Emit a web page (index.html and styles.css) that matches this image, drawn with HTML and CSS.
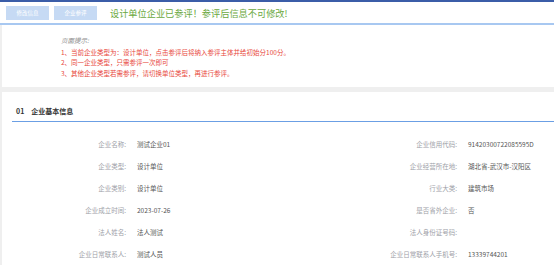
FILE: index.html
```html
<!DOCTYPE html>
<html lang="zh">
<head>
<meta charset="utf-8">
<link rel="stylesheet" href="styles.css">
</head>
<body>
<div class="topbar"></div>
<div class="toolbar">
  <button class="btn">修改信息</button>
  <button class="btn">企业参评</button>
  <span class="alert-title">设计单位企业已参评！参评后信息不可修改!</span>
</div>
<div class="page">
  <div class="notice">
    <div class="notice-title">页面提示:</div>
    <div class="notice-line">1、当前企业类型为：设计单位，点击参评后将纳入参评主体并给初始分100分。</div>
    <div class="notice-line">2、同一企业类型，只需参评一次即可</div>
    <div class="notice-line">3、其他企业类型若需参评，请切换单位类型，再进行参评。</div>
  </div>
  <div class="card">
    <div class="card-head"><span class="num">01</span><span class="head-title">企业基本信息</span></div>
    <div class="grid">
      <div class="lbl">企业名称:</div><div class="val">测试企业01</div>
      <div class="lbl">企业信用代码:</div><div class="val">91420300722085595D</div>
      <div class="lbl">企业类型:</div><div class="val">设计单位</div>
      <div class="lbl">企业经营所在地:</div><div class="val">湖北省-武汉市-汉阳区</div>
      <div class="lbl">企业类别:</div><div class="val">设计单位</div>
      <div class="lbl">行业大类:</div><div class="val">建筑市场</div>
      <div class="lbl">企业成立时间:</div><div class="val">2023-07-26</div>
      <div class="lbl">是否省外企业:</div><div class="val">否</div>
      <div class="lbl">法人姓名:</div><div class="val">法人测试</div>
      <div class="lbl">法人身份证号码:</div><div class="val"></div>
      <div class="lbl">企业日常联系人:</div><div class="val">测试人员</div>
      <div class="lbl">企业日常联系人手机号:</div><div class="val">13339744201</div>
    </div>
  </div>
</div>
</body>
</html>
```

FILE: styles.css
```css
html, body {
  margin: 0;
  padding: 0;
  background: #ffffff;
  font-family: "Noto Sans CJK SC", "Noto Sans", sans-serif;
}
.topbar {
  height: 2px;
  background: #3b5da8;
}
.toolbar {
  height: 21px;
  display: flex;
  align-items: center;
  gap: 5px;
  padding-left: 6px;
  border-bottom: 2px solid #a8c8f1;
  background: #fff;
}
.btn {
  width: 43px;
  height: 14px;
  padding: 0;
  border: none;
  background: #c6daf4;
  color: #ffffff;
  font-family: inherit;
  font-size: 5.5px;
  line-height: 14px;
}
.alert-title {
  margin-left: 8px;
  color: #6aa83e;
  font-size: 9.2px;
  line-height: 12px;
}
.page {
  background: #efefef;
  padding-left: 2px;
}
.notice {
  background: #fff;
  padding: 10px 0 8px 59px;
  font-size: 6.5px;
  line-height: 10.7px;
}
.notice-title {
  color: #8a8a8a;
  font-style: italic;
  margin-bottom: 1px;
}
.notice-line {
  color: #e8473b;
}
.card {
  background: #fff;
  margin-top: 5px;
  padding-bottom: 6px;
}
.card-head {
  margin-left: 10px;
  padding: 14px 0 5px 4px;
  border-bottom: 1px solid #6b9fe4;
  font-size: 7px;
  line-height: 10px;
  font-weight: bold;
  color: #333;
  display: flex;
  gap: 7px;
}
.grid {
  margin-top: 11px;
  display: grid;
  grid-template-columns: 124px 174px 157px 1fr;
  grid-auto-rows: 22px;
  align-items: center;
  font-size: 6.5px;
  line-height: 10px;
}
.lbl {
  text-align: right;
  color: #9ea1a8;
}
.val {
  padding-left: 11px;
  color: #555;
}
```
